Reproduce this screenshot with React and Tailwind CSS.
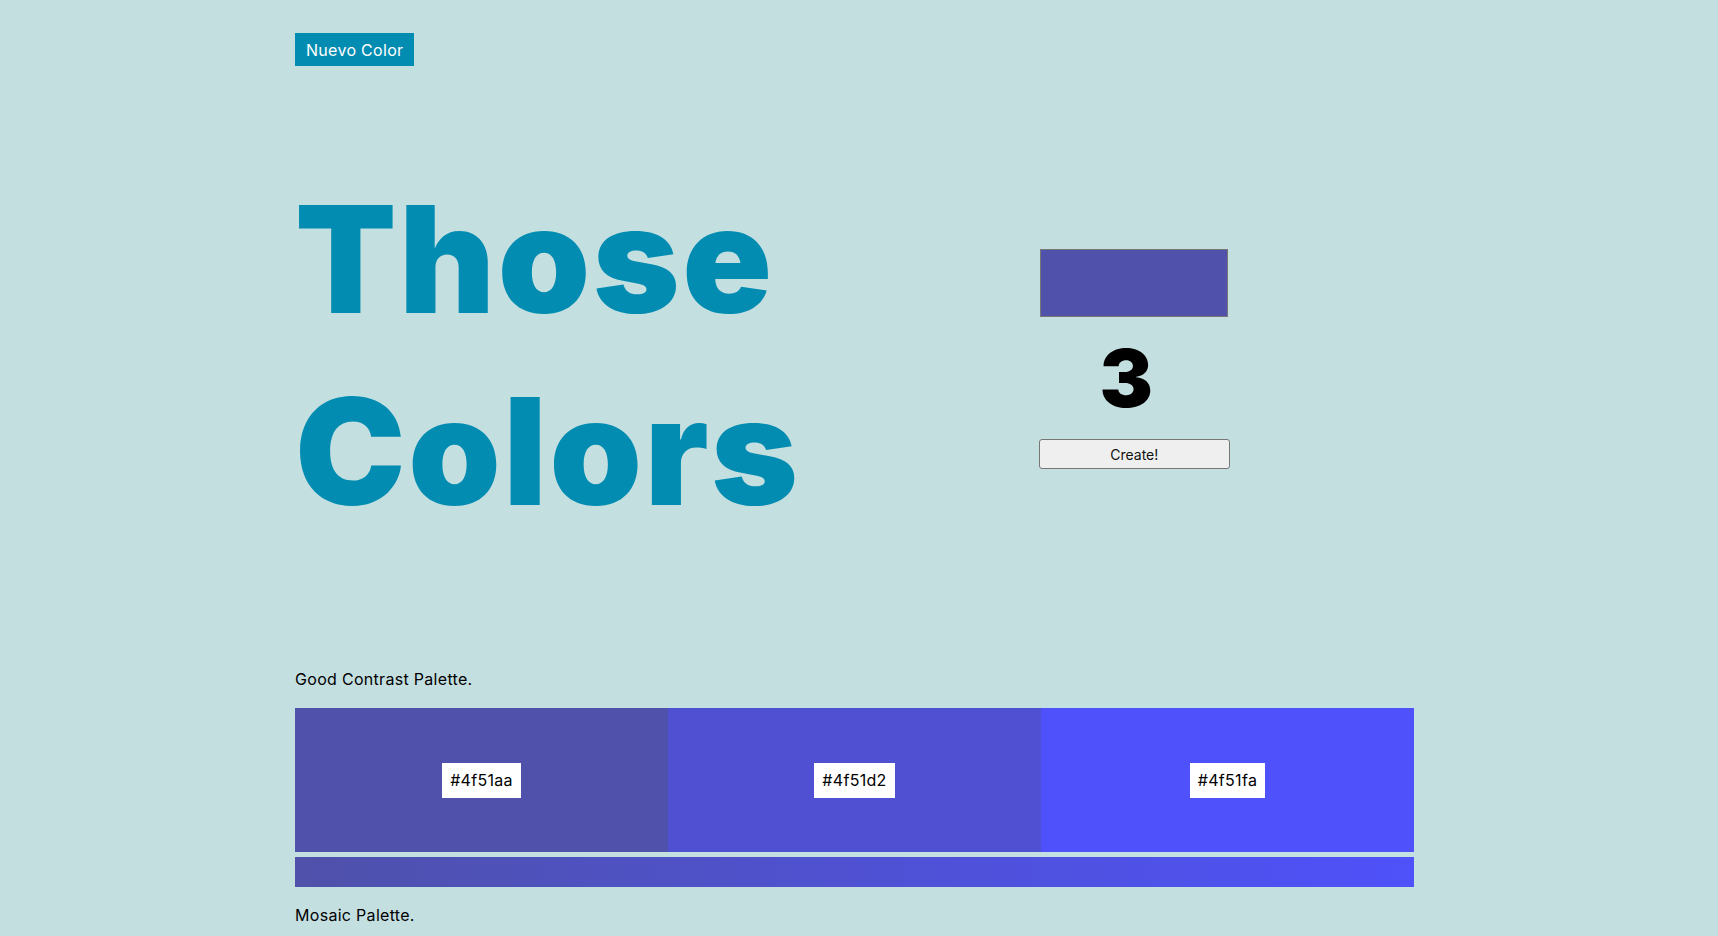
import React from 'react';

const palette = ['#4f51aa', '#4f51d2', '#4f51fa'];

const App = () => {
  return (
    <div className="min-h-screen bg-[#c4dfe0] font-['Inter',sans-serif] text-black">
      <div className="ml-[295px] w-[1119px] pt-[33px]">
        {/* Boton superior */}
        <button className="h-[33px] px-[11px] bg-[#038cb2] text-white text-[16px] tracking-[0.3px]">
          Nuevo Color
        </button>

        {/* Hero */}
        <div className="grid grid-cols-2 items-start mt-[98px]">
          <h1 className="text-[#038cb2] font-black text-[148px] leading-[192px] tracking-[2.5px]">
            Those Colors
          </h1>
          <div className="flex flex-col items-center mt-[85px]">
            <div className="w-[188px] h-[68px] bg-[#4f51aa] border border-[#777777]"></div>
            <p className="mt-[19px] font-black text-[80px] leading-[84px] -ml-[16px]">3</p>
            <button className="mt-[19px] w-[191px] h-[30px] bg-[#efefef] border border-[#767676] rounded-[3px] text-[14px] text-[#111]">
              Create!
            </button>
          </div>
        </div>

        {/* Paleta de buen contraste */}
        <p className="mt-[119px] text-[16px] leading-[24px] tracking-[0.3px]">Good Contrast Palette.</p>
        <div className="mt-[17px] grid grid-cols-3 h-[144px]">
          {palette.map((c) => (
            <div key={c} className="flex items-center justify-center" style={{ backgroundColor: c }}>
              <span className="bg-white h-[35px] px-[8px] flex items-center text-[16px] tracking-[0.3px]">{c}</span>
            </div>
          ))}
        </div>
        <div className="mt-[5px] h-[30px] bg-gradient-to-r from-[#4f51aa] via-[#4f51d2] to-[#4f51fa]"></div>

        <p className="mt-[16px] text-[16px] leading-[24px] tracking-[0.3px]">Mosaic Palette.</p>
      </div>
    </div>
  );
};

export default App;
